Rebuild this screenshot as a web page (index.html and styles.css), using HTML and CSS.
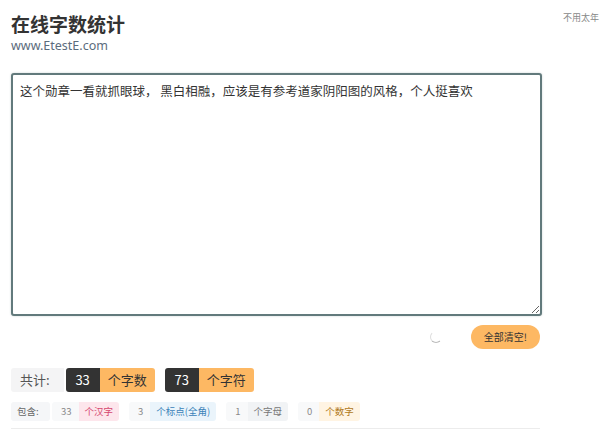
FILE: index.html
```html
<!doctype html>
<html>
<head>
<meta charset="UTF-8">
<title>在线字数统计</title>
<link rel="stylesheet" href="styles.css">
</head>
<body>
	<div class="page">
		<div class="head">
			<h1 class="title">在线字数统计</h1>
			<a class="site" href="javascript:void(0);">www.EtestE.com</a>
			<span class="tip">不用太年</span>
		</div>
		<textarea class="box" id="box">这个勋章一看就抓眼球， 黑白相融，应该是有参考道家阴阳图的风格，个人挺喜欢</textarea>
		<div class="tools">
			<span class="spin"></span>
			<a class="clear" id="clear" href="javascript:void(0);">全部清空!</a>
		</div>
		<div class="total">
			<span class="lab">共计:</span>
			<span class="num">33</span><span class="unit">个字数</span>
			<span class="num">73</span><span class="unit">个字符</span>
		</div>
		<div class="detail">
			<span class="lab">包含:</span>
			<span class="grp"><span class="n">33</span><span class="u pink">个汉字</span></span>
			<span class="grp"><span class="n">3</span><span class="u blue">个标点(全角)</span></span>
			<span class="grp"><span class="n">1</span><span class="u gray">个字母</span></span>
			<span class="grp"><span class="n">0</span><span class="u gold">个数字</span></span>
		</div>
		<div class="line"></div>
	</div>
</body>
</html>
```
FILE: styles.css
```css
*{margin:0;padding:0;box-sizing:border-box;}
body{font-family:"Noto Sans CJK SC","Noto Sans",sans-serif;color:#333;background:#fff;overflow:hidden;}
a{text-decoration:none;}
.page{width:531px;margin:0 0 0 11px;padding-top:10px;}
/*head*/
.head{position:relative;height:63px;}
.title{font-size:19px;font-weight:700;line-height:28px;color:#333;}
.site{display:block;font-family:"Noto Sans",sans-serif;font-size:12.5px;line-height:16px;color:#5b6b7c;}
.tip{position:absolute;left:552px;top:1px;font-size:9px;color:#888;white-space:nowrap;}
/*textarea*/
.box{display:block;width:531px;height:243px;border:2px solid #627a7c;border-radius:3px;padding:6px 7px;font-family:"Noto Sans CJK SC",sans-serif;font-size:12.5px;line-height:20px;color:#333;resize:both;outline:none;box-shadow:0 0 2px rgba(60,90,90,.3);}
/*tools*/
.tools{display:flex;justify-content:flex-end;align-items:center;gap:29px;height:44px;padding-right:2px;padding-bottom:2px;}
.spin{width:12px;height:12px;border-radius:50%;border:1px solid transparent;border-bottom-color:#bbb;border-left-color:#ddd;margin-top:0;}
.clear{display:block;height:24px;line-height:24px;padding:0 13px;background:#fdb863;border-radius:12px;font-size:10px;color:#333;}
/*total*/
.total{display:flex;align-items:center;height:24px;font-size:13px;margin-top:8px;}
.total .lab{display:block;height:24px;line-height:24px;padding:0 14px 0 9px;background:#f4f4f5;color:#555;margin-right:2px;border-radius:3px 0 0 3px;}
.total .num{display:block;height:24px;line-height:24px;width:34px;text-align:center;background:#333;color:#fff;border-radius:3px 0 0 3px;}
.total .unit{display:block;height:24px;line-height:24px;padding:0 8px;background:#fdb863;color:#333;border-radius:0 3px 3px 0;margin-right:10px;}
/*detail*/
.detail{display:flex;align-items:center;gap:10px;margin-top:10px;height:19px;font-size:9.5px;}
.detail .lab{display:block;height:19px;line-height:19px;width:39px;padding-left:6px;background:#f5f6f8;color:#666;border-radius:3px;margin-right:-8px;}
.grp{display:flex;height:19px;line-height:19px;border-radius:3px;overflow:hidden;}
.grp .n{display:block;padding:0 7px 0 9px;background:#f8f9fa;color:#888;}
.grp .u{display:block;padding:0 6px;}
.pink{background:#fde6ec;color:#d5476e;}
.blue{background:#eaf4fb;color:#3b82b8;}
.gray{background:#f1f3f5;color:#777;}
.gold{background:#fff4e3;color:#b07820;}
.line{height:1px;background:#ececec;margin-top:7px;width:529px;}
```
